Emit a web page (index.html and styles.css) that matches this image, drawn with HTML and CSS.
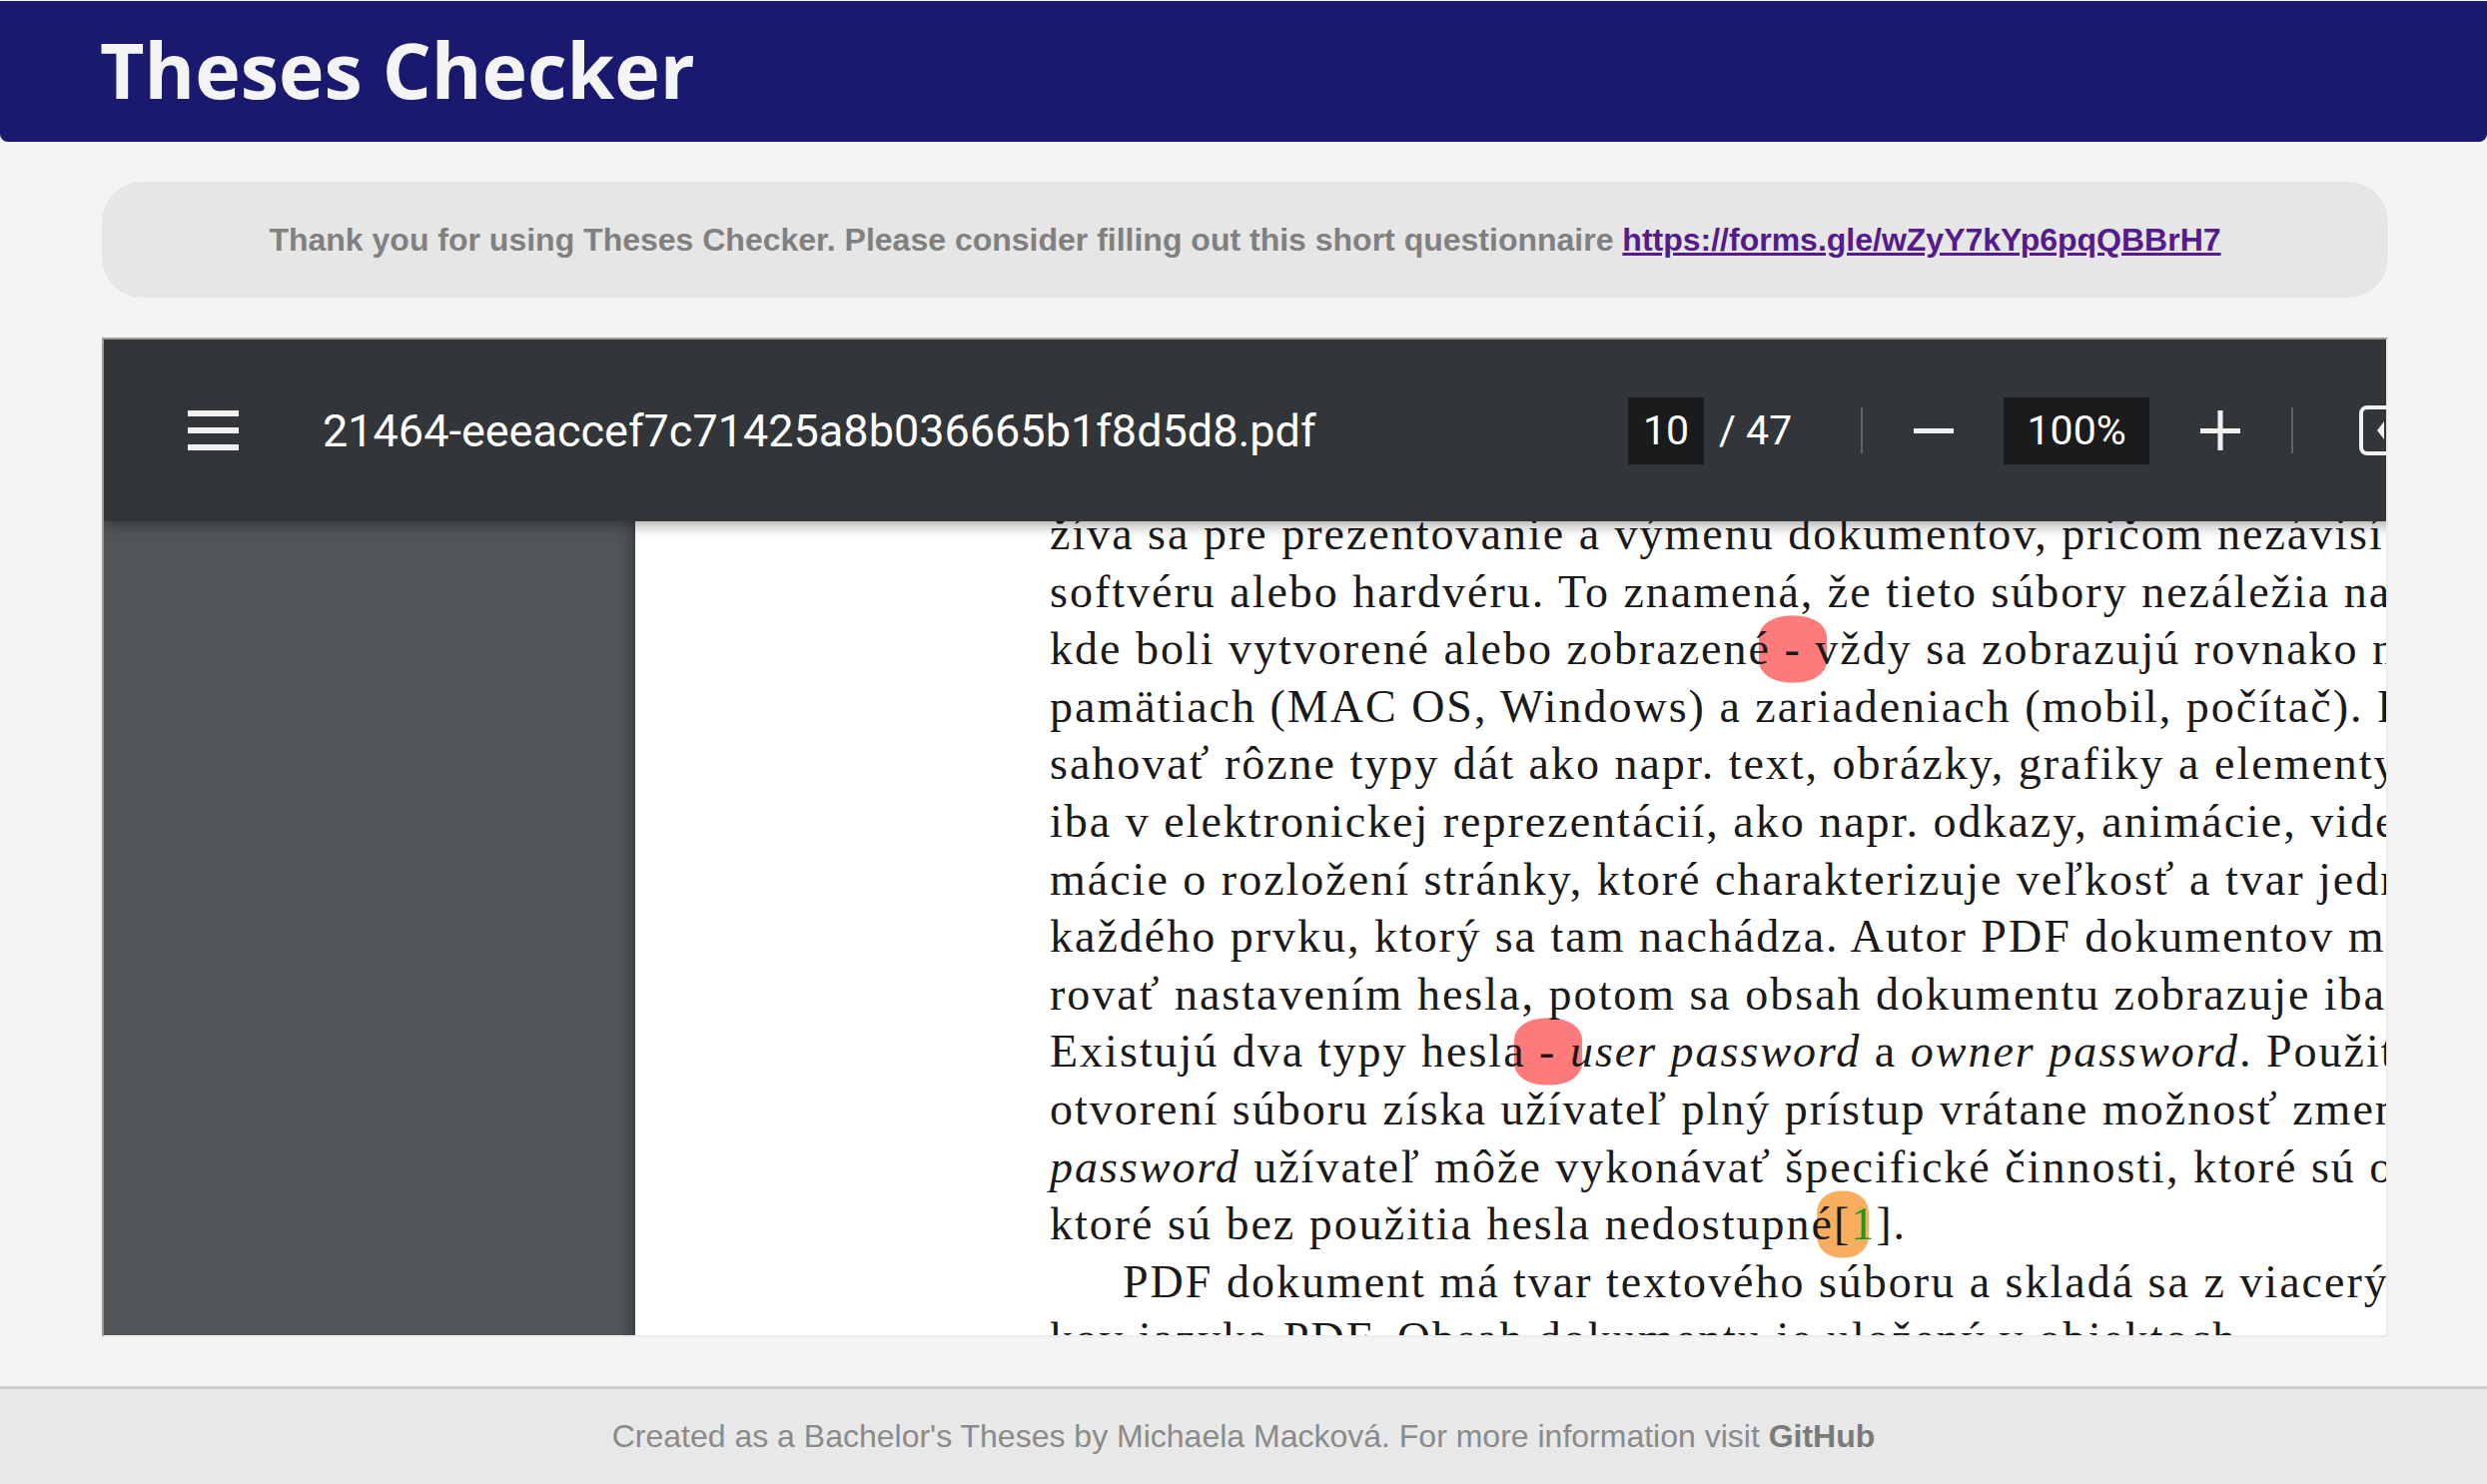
FILE: index.html
```html
<!DOCTYPE html>
<html lang="sk">
<head>
<meta charset="utf-8">
<title>Theses Checker</title>
<link rel="stylesheet" href="styles.css">
</head>
<body>
<header class="site-header">
  <h1 class="site-title">Theses Checker</h1>
</header>
<main class="main">
  <div class="notice"><p class="notice-text">Thank you for using Theses Checker. Please consider filling out this short questionnaire <a class="notice-link" href="#">https://forms.gle/wZyY7kYp6pqQBBrH7</a></p></div>
  <div class="viewer-frame">
    <div class="viewer">
      <div class="toolbar">
        <div class="tb-left">
          <svg class="icon-menu" width="51" height="40" viewBox="0 0 51 40"><rect x="0" y="0" width="51" height="6" fill="#f1f1f1"/><rect x="0" y="17" width="51" height="6" fill="#f1f1f1"/><rect x="0" y="34" width="51" height="6" fill="#f1f1f1"/></svg>
          <span class="filename">21464-eeeaccef7c71425a8b036665b1f8d5d8.pdf</span>
        </div>
        <div class="tb-center">
          <span class="num-box page-box">10</span>
          <span class="page-total">/ 47</span>
          <span class="tb-sep"></span>
          <svg class="icon-minus" width="40" height="40" viewBox="0 0 40 40"><rect x="0" y="18" width="40" height="5" fill="#f1f1f1"/></svg>
          <span class="num-box zoom-box">100%</span>
          <svg class="icon-plus" width="40" height="40" viewBox="0 0 40 40"><rect x="0" y="18" width="40" height="5" fill="#f1f1f1"/><rect x="17.5" y="0" width="5" height="40" fill="#f1f1f1"/></svg>
          <span class="tb-sep"></span>
          <svg class="icon-fit" width="50" height="50" viewBox="0 0 50 50"><rect x="2" y="2" width="46" height="46" rx="6" fill="none" stroke="#f1f1f1" stroke-width="4"/><path d="M25 16 L18 25 L25 34 Z" fill="#f1f1f1"/><path d="M33 16 L40 25 L33 34 Z" fill="#f1f1f1"/></svg>
        </div>
      </div>
      <div class="content">
        <div class="pdf-page">
          <div class="pdf-text">
            <div class="ln">žíva sa pre prezentovanie a výmenu dokumentov, pričom nezávisí na</div>
            <div class="ln">softvéru alebo hardvéru. To znamená, že tieto súbory nezáležia na</div>
            <div class="ln">kde boli vytvorené alebo zobrazené<span class="hl hl-red"> - </span>vždy sa zobrazujú rovnako na</div>
            <div class="ln">pamätiach (MAC OS, Windows) a zariadeniach (mobil, počítač). PDF</div>
            <div class="ln">sahovať rôzne typy dát ako napr. text, obrázky, grafiky a elementy</div>
            <div class="ln">iba v elektronickej reprezentácií, ako napr. odkazy, animácie, videá</div>
            <div class="ln">mácie o rozložení stránky, ktoré charakterizuje veľkosť a tvar jednotlivých</div>
            <div class="ln">každého prvku, ktorý sa tam nachádza. Autor PDF dokumentov môže</div>
            <div class="ln">rovať nastavením hesla, potom sa obsah dokumentu zobrazuje iba</div>
            <div class="ln">Existujú dva typy hesla<span class="hl hl-red"> - </span><i>user password</i> a <i>owner password</i>. Použitím</div>
            <div class="ln">otvorení súboru získa užívateľ plný prístup vrátane možnosť zmeny</div>
            <div class="ln"><i>password</i> užívateľ môže vykonávať špecifické činnosti, ktoré sú obmedzené</div>
            <div class="ln">ktoré sú bez použitia hesla nedostupné<span class="hl hl-orange">[</span><span class="cite">1</span>].</div>
            <div class="ln indent">PDF dokument má tvar textového súboru a skladá sa z viacerých</div>
            <div class="ln">kov jazyka PDF. Obsah dokumentu je uložený v objektoch</div>
          </div>
        </div>
      </div>
    </div>
  </div>
</main>
<footer class="site-footer">
  <p class="footer-text">Created as a Bachelor's Theses by Michaela Macková. For more information visit <b class="gh">GitHub</b></p>
</footer>
</body>
</html>
```

FILE: styles.css
```css
html, body {
  margin: 0;
  padding: 0;
}
body {
  background: #f4f4f4;
  font-family: "Liberation Sans", Arial, sans-serif;
  width: 2490px;
  height: 1486px;
  overflow: hidden;
}
.site-header {
  margin-top: 1px;
  height: 141px;
  background: #191970;
  border-radius: 0 0 8px 8px;
  padding-left: 100px;
  display: flex;
  align-items: center;
  box-sizing: border-box;
}
.site-title {
  margin: 0;
  font-family: "Open Sans", sans-serif;
  font-weight: 700;
  font-size: 77px;
  color: #f4f4f4;
  line-height: 1;
  position: relative;
  top: -2px;
}
.main {
  padding: 0 99px 0 102px;
}
.notice {
  margin-top: 40px;
  height: 116px;
  border-radius: 40px;
  background: #e6e6e6;
  display: flex;
  align-items: center;
  justify-content: center;
}
.notice-text {
  margin: 0;
  font-weight: 700;
  font-size: 32px;
  color: #808080;
  white-space: nowrap;
}
.notice-link {
  color: #551a8b;
  text-decoration: underline;
}
.viewer-frame {
  margin-top: 40px;
  height: 1001px;
  box-sizing: border-box;
  border-style: solid;
  border-width: 2px;
  border-color: #9a9a9a #ececec #ececec #9a9a9a;
  overflow: hidden;
  position: relative;
}
.viewer {
  width: 2700px;
  height: 1200px;
  position: relative;
}
.toolbar {
  position: absolute;
  left: 0;
  top: 0;
  right: 0;
  height: 182px;
  background: #323639;
  display: flex;
  align-items: center;
  z-index: 2;
  box-shadow: 0 4px 14px rgba(0,0,0,0.35);
}
.tb-left {
  flex: 0 0 1526px;
  display: flex;
  align-items: center;
  padding-left: 84px;
  box-sizing: border-box;
}
.icon-menu {
  display: block;
  flex: none;
}
.filename {
  margin-left: 84px;
  font-family: Roboto, sans-serif;
  font-size: 45px;
  color: #ffffff;
  white-space: nowrap;
}
.tb-center {
  display: flex;
  align-items: center;
}
.num-box {
  display: flex;
  align-items: center;
  justify-content: center;
  height: 67px;
  background: #191b1c;
  font-family: Roboto, sans-serif;
  font-size: 41px;
  color: #ffffff;
}
.page-box {
  width: 76px;
}
.page-total {
  margin-left: 15px;
  font-family: Roboto, sans-serif;
  font-size: 41px;
  color: #ffffff;
  white-space: nowrap;
}
.tb-sep {
  display: block;
  width: 2px;
  height: 46px;
  background: #5f6368;
  margin-left: 69px;
}
.icon-minus {
  display: block;
  margin-left: 51px;
}
.zoom-box {
  width: 146px;
  margin-left: 50px;
}
.icon-plus {
  display: block;
  margin-left: 51px;
}
.icon-plus + .tb-sep {
  margin-left: 51px;
}
.icon-fit {
  display: block;
  margin-left: 66px;
}
.content {
  position: absolute;
  left: 0;
  top: 0;
  right: 0;
  bottom: 0;
  background: #525659;
  padding-left: 532px;
}
.pdf-page {
  background: #ffffff;
  height: 100%;
  box-shadow: 0 0 18px rgba(0,0,0,0.45);
  padding-left: 415px;
  padding-top: 166px;
  box-sizing: border-box;
}
.pdf-text {
  font-family: "Liberation Serif", "Times New Roman", serif;
  font-size: 46px;
  line-height: 57.6px;
  color: #1a1a1a;
  letter-spacing: 2px;
  position: relative;
  z-index: 0;
}
.ln {
  white-space: pre;
}
.indent {
  padding-left: 73px;
}
.hl {
  position: relative;
}
.hl::before {
  content: "";
  position: absolute;
  left: 50%;
  top: 50%;
  transform: translate(-50%, -50%);
  border-radius: 45% / 32%;
  z-index: -1;
}
.hl-red::before {
  width: 68px;
  height: 67px;
  background: #ff7b7b;
}
.hl-orange::before {
  width: 52px;
  height: 67px;
  background: #f9ad5f;
}
.cite {
  color: #1a9a1a;
}
.site-footer {
  margin-top: 49px;
  border-top: 3px solid #cdcdcd;
  background: #e8e8e8;
  height: 95px;
  display: flex;
  align-items: center;
  justify-content: center;
}
.footer-text {
  margin: 0;
  font-size: 32px;
  color: #8a8a8a;
  white-space: nowrap;
}
.gh {
  color: #7a7a7a;
}
```
